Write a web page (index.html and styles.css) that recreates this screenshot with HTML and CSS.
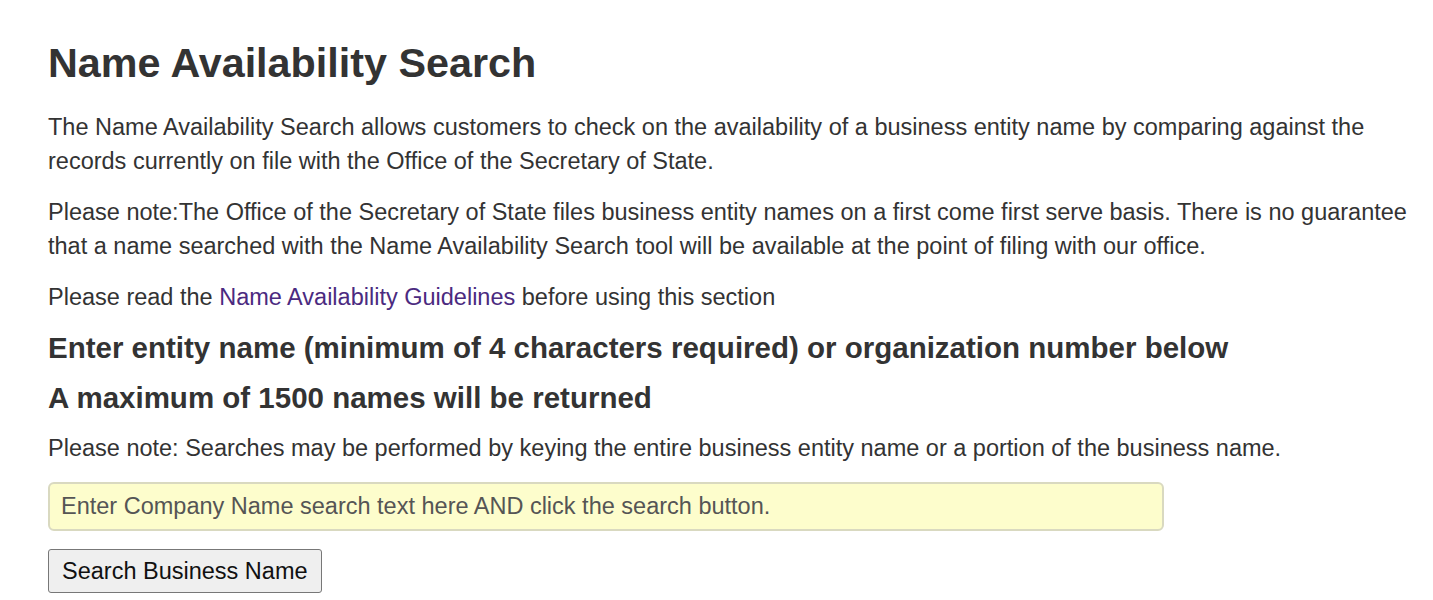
FILE: index.html
```html
<!DOCTYPE html>
<html lang="en">
<head>
<meta charset="utf-8">
<title>Name Availability Search</title>
<link rel="stylesheet" href="styles.css">
</head>
<body>
<main class="page">
  <h1 class="title">Name Availability Search</h1>
  <p class="text">The Name Availability Search allows customers to check on the availability of a business entity name by comparing against the records currently on file with the Office of the Secretary of State.</p>
  <p class="text">Please note:The Office of the Secretary of State files business entity names on a first come first serve basis. There is no guarantee that a name searched with the Name Availability Search tool will be available at the point of filing with our office.</p>
  <p class="text">Please read the <a class="link" href="#">Name Availability Guidelines</a> before using this section</p>
  <h3 class="subtitle">Enter entity name (minimum of 4 characters required) or organization number below</h3>
  <h3 class="subtitle">A maximum of 1500 names will be returned</h3>
  <p class="text">Please note: Searches may be performed by keying the entire business entity name or a portion of the business name.</p>
  <form class="search" onsubmit="return false">
    <input class="search-input" type="text" placeholder="Enter Company Name search text here AND click the search button.">
    <button class="search-btn" type="submit">Search Business Name</button>
  </form>
</main>
</body>
</html>
```
FILE: styles.css
```css
html, body {
  margin: 0;
  padding: 0;
  background: #fff;
}
body {
  font-family: "Liberation Sans", Arial, sans-serif;
  color: #333;
  font-size: 23.5px;
  line-height: 34px;
}
.page {
  padding: 39px 16px 0 48px;
}
.title {
  margin: 0 0 23px;
  font-size: 41.3px;
  line-height: 48px;
  font-weight: bold;
  color: #333;
}
.text {
  margin: 0 0 17px;
}
.link {
  color: #4b2a80;
  text-decoration: none;
}
.subtitle {
  margin: 0 0 16px;
  font-size: 29.5px;
  line-height: 34px;
  font-weight: bold;
  color: #333;
}
.search {
  display: flex;
  flex-direction: column;
  align-items: flex-start;
  gap: 18px;
  margin-top: 1px;
}
.search-input {
  box-sizing: border-box;
  width: 1116px;
  height: 49px;
  padding: 0 11px;
  font-family: inherit;
  font-size: 23.5px;
  color: #555;
  background: #fdfdcc;
  border: 2px solid #d9d9c0;
  border-radius: 6px;
  outline: none;
}
.search-input::placeholder {
  color: #555;
  opacity: 1;
}
.search-btn {
  box-sizing: border-box;
  height: 44px;
  padding: 0 13px;
  font-family: inherit;
  font-size: 23.5px;
  color: #111;
  background: #efefef;
  border: 1.5px solid #777;
  border-radius: 3px;
}
```
